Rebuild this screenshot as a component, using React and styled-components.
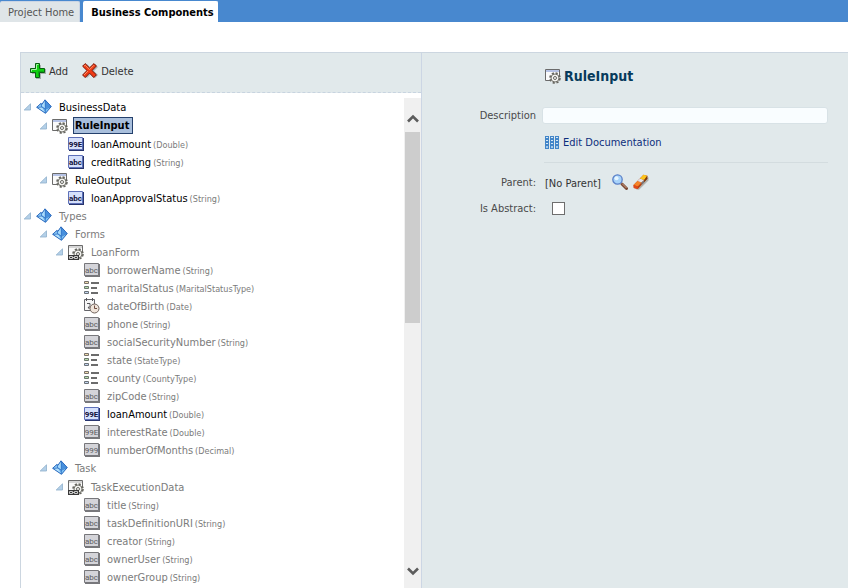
import React, { useState } from 'react'
import styled, { createGlobalStyle, css } from 'styled-components'

const GlobalStyle = createGlobalStyle`
    * { box-sizing: border-box; }
    body {
        margin: 0;
        background: #ffffff;
        font-family: Tahoma, "DejaVu Sans Condensed", "Noto Sans", sans-serif;
        font-size: 11px;
        color: #333333;
    }
    button, input { font: inherit; color: inherit; }
    svg { display: block; flex: none; }
`

const Page = styled.div`
    height: 100vh;
    display: flex;
    flex-direction: column;
    overflow: hidden;
`
const TabBar = styled.nav`
    display: flex;
    align-items: flex-end;
    gap: 3px;
    height: 22px;
    background: #4888cf;
`
const Tab = styled.button`
    height: 21px;
    padding: 0 5px 0 8px;
    border: 1px solid #cbd5e4;
    border-left-width: 0;
    border-bottom: none;
    border-radius: 2px 2px 0 0;
    background: #dfe5e8;
    color: #555555;
    white-space: nowrap;
    cursor: pointer;
    ${({ $active }) => $active && css`
        border-color: #ffffff;
        background: #ffffff;
        color: #000000;
        font-weight: bold;
        padding: 0 3px 0 8px;
    `}
`
const Workspace = styled.main`
    flex: 1;
    min-height: 0;
    display: flex;
    margin: 30px 0 0 20px;
    border-top: 1px solid #ccd6e0;
    border-left: 1px solid #ccd6e0;
    background: #e1e9eb;
`
const TreePanel = styled.section`
    width: 401px;
    flex: none;
    display: flex;
    flex-direction: column;
    border-right: 1px solid #ccd6e4;
`
const Toolbar = styled.div`
    display: flex;
    align-items: center;
    gap: 14px;
    height: 40px;
    padding: 0 0 3px 9px;
    border-bottom: 1px dashed #c8d4e0;
`
const ToolButton = styled.button`
    display: flex;
    align-items: center;
    gap: 3px;
    padding: 0;
    border: none;
    background: none;
    cursor: pointer;
`
const TreeArea = styled.div`
    flex: 1;
    min-height: 0;
    display: flex;
    padding-top: 5px;
    background: #ffffff;
`
const Tree = styled.ul`
    flex: 1;
    min-width: 0;
    margin: 0;
    padding: 0;
    list-style: none;
    overflow: hidden;
`
const Row = styled.li`
    display: flex;
    align-items: center;
    height: ${({ $tall }) => ($tall ? 19 : 18)}px;
    padding-left: ${({ $level }) => 2 + $level * 16}px;
    white-space: nowrap;
    color: ${({ $own }) => ($own ? '#000000' : '#7b7b7b')};
`
const Toggle = styled.span`
    width: 13px;
    flex: none;
`
const Name = styled.span`
    margin-left: 5px;
    padding: 1px 2px 0;
    line-height: 17px;
    ${({ $selected }) => $selected && css`
        padding: 0 3px 0 1px;
        line-height: 15px;
        border: 1px solid #24406c;
        background: #a9bfdc;
        font-weight: bold;
    `}
`
const Type = styled.span`
    padding-top: 1px;
    font-size: 9px;
    line-height: 16px;
    color: #7b7b7b;
`
const ScrollBar = styled.div`
    width: 17px;
    display: flex;
    flex-direction: column;
    background: #f0f0f0;
`
const ScrollButton = styled.button`
    height: 34px;
    display: flex;
    align-items: center;
    justify-content: center;
    padding: ${({ $up }) => ($up ? '8px 0 0' : 0)};
    border: none;
    background: none;
`
const Track = styled.div`
    flex: 1;
    padding: 0 1px;
`
const Thumb = styled.div`
    height: 191px;
    background: #cdcdcd;
`
const Details = styled.section`
    flex: 1;
    min-width: 0;
    padding: 4px 20px 0 0;
`
const Line = styled.div`
    display: grid;
    grid-template-columns: 114px 1fr;
    column-gap: 6px;
    align-items: center;
    height: ${({ $height }) => $height}px;
`
const Label = styled.label`
    text-align: right;
    color: #4a4a4a;
`
const Field = styled.div`
    grid-column: 2;
    display: flex;
    align-items: center;
    gap: 3px;
    padding-left: 3px;
`
const Value = styled.span`
    padding-top: 2px;
`
const Title = styled.h1`
    margin: 0;
    font-size: 14px;
    line-height: 18px;
    color: #063a5b;
`
const TextInput = styled.input`
    width: 100%;
    height: 17px;
    padding: 0 3px;
    border: 1px solid #d8e2e6;
    border-radius: 3px;
    background: #f9fdff;
`
const DocLink = styled.a`
    color: #0d2e7c;
    text-decoration: none;
`
const Rule = styled.hr`
    margin: 13px 0 6px 122px;
    border: none;
    border-top: 1px solid #d3dcdf;
`
const IconButton = styled.button`
    margin-left: ${({ $first }) => ($first ? 8 : 2)}px;
    padding: 0;
    border: none;
    background: none;
    cursor: pointer;
`
const CheckBox = styled.input`
    appearance: none;
    width: 13px;
    height: 13px;
    margin: 0 0 0 7px;
    border: 1px solid #6e6e6e;
    background: #ffffff;
    &:checked { background: #6e6e6e; }
`

const AddIcon = () => (
    <svg width="16" height="16" viewBox="0 0 16 16">
        <path d="M7 2h4v4h5v5h-5v5H6v-5H2V8" fill="#8b958f" opacity=".7" />
        <path d="M5.500 .5h4v5h5v4h-5v5h-4v-5h-5v-4h5z" fill="#0fd00f" stroke="#0a5f12" />
        <path d="M6.500 6.500V1.500h2M1.500 8.500v-2h5" fill="none" stroke="#a8f5a5" />
        <path d="M8.500 13V8.500h5" fill="none" stroke="#0aa812" />
    </svg>
)
const DeleteIcon = () => (
    <svg width="16" height="16" viewBox="0 0 16 16">
        <path d="M2 4L5 1l4 4 4-4 3 3-4 4 4 4-3 3-4-4-4 4-3-3 4-4z" fill="#8c9494" opacity=".6" />
        <path d="M.6 3.200L3.200.6l4.300 4.300L12 .6l2.400 2.400-4.400 4.500 4.400 4.300-2.600 2.800-4.300-4.500-4.300 4.500-2.600-2.600L5 7.500z" fill="#f03a14" stroke="#7c1608" />
        <path d="M2 3.200l1.200-1 4.300 4.500 4.500-4.500M2 12l4-4" fill="none" stroke="#ff9166" />
    </svg>
)
const PackageIcon = () => (
    <svg width="16" height="16" viewBox="0 0 16 16">
        <path d="M9 .8L15.300 7.500l-5.800 7L.6 8.300 4.800 4.500 6 5z" fill="#62abea" />
        <path d="M.6 8.300L4.800 4.500 6 8.500z" fill="#8ecbf7" />
        <path d="M9 1v8.500L5.500 7z" fill="#a9dbfb" />
        <path d="M9 1l6 6.500-5.500 2z" fill="#468fdd" />
        <path d="M1 8.500l5-.5 3.500 6z" fill="#b2e0fc" />
        <path d="M9.500 9.500l5.500-2-5.500 6.800z" fill="#7fc5f6" />
        <path d="M9.500 14.300L.6 8.300l4.200-3.800L6 5.200l3-4.400 6.300 6.700z" fill="none" stroke="#2461b8" strokeWidth=".9" />
        <path d="M9.300 1v13M4.800 4.500l1 3.500 3.700 2.200L15 7.500M1 8.400l5-.4" fill="none" stroke="#2f70c4" strokeWidth=".8" />
    </svg>
)
const ObjectIcon = ({ linked }) => (
    <svg width="16" height="16" viewBox="0 0 16 16">
        <path d="M.5 1.500h14v11H.5z" fill="#fafafa" stroke="#6b6b6b" />
        <path d="M1 2h13v2H1z" fill={linked ? '#d6d6d6' : '#b6c3e6'} />
        <circle cx="10" cy="10" r="5" fill="#f3f3f0" stroke="#65655f" strokeWidth="1.600" strokeDasharray="2.200 1.727" />
        <circle cx="10" cy="10" r="4" fill="#f3f3f0" stroke="#65655f" strokeWidth=".9" />
        <circle cx="10" cy="10" r="1.500" fill="#ffffff" stroke="#65655f" />
        {linked && (
            <>
                <path d="M0 11h11v5H0z" fill="#383838" />
                <path d="M1.500 12.500h3v2h-3zM6.500 12.500h3v2h-3zM4 13.500h3" fill="none" stroke="#c9c9c9" />
            </>
        )}
    </svg>
)
const ValueIcon = ({ text, own }) => (
    <svg width="16" height="16" viewBox="0 0 16 16">
        <path d="M1 2h15v13H1z" fill={own ? '#26346e' : '#77777b'} />
        <path d="M.5 1.500h14v12H.5z" fill={own ? '#d5e0fb' : '#d4d4d9'} stroke={own ? '#5e70b8' : '#77777b'} />
        {text && (
            <text x="7.500" y="10.500" textAnchor="middle" fontFamily="Roboto, sans-serif" fontSize="8" fontWeight={own ? 'bold' : 'normal'} fill={own ? '#10103c' : '#5c5c60'}>{text}</text>
        )}
    </svg>
)
const EnumIcon = () => (
    <svg width="16" height="16" viewBox="0 0 16 16">
        <path d="M.5 1.500h4v2h-4z" fill="#efdcae" stroke="#77716b" />
        <path d="M.5 6.500h4v2h-4z" fill="#b7dcae" stroke="#6b776b" />
        <path d="M.5 11.500h4v2h-4z" fill="#c3d6f0" stroke="#6b7177" />
        <path d="M7 3h8M7 8h6M7 13h7" stroke="#6c6c6c" strokeWidth="2" />
    </svg>
)
const DateIcon = () => (
    <svg width="16" height="16" viewBox="0 0 16 16">
        <path d="M.5 1.500h10v11H.5z" fill="#f6f6f6" stroke="#65656a" />
        <path d="M2.500 0v3M8.500 0v3" stroke="#55555a" />
        <path d="M3 5.500h3v2L4 10h3" fill="none" stroke="#55555a" />
        <circle cx="10.500" cy="10.500" r="4.500" fill="#efe4da" stroke="#6f625c" />
        <path d="M10.500 7.500v3H13" fill="none" stroke="#6f4c40" />
    </svg>
)
const BooksIcon = () => (
    <svg width="15" height="13" viewBox="0 0 15 13">
        {[0, 5, 10].map((x) => (
            <g key={x}>
                <path d={`M${x} 0h4v13h-4z`} fill="#4285c8" />
                <path d={`M${x + 1} 1.500h2M${x + 1} 4.500h2M${x + 1} 7.500h2`} stroke="#d5e7f5" />
                <path d={`M${x + 1} 11h2`} stroke="#a5c8e8" strokeWidth="2" />
            </g>
        ))}
    </svg>
)
const SearchIcon = () => (
    <svg width="16" height="16" viewBox="0 0 16 16">
        <path d="M10 10l4.500 4.500" stroke="#7a4935" strokeWidth="3" strokeLinecap="round" />
        <path d="M10 9.500l4.500 4.500" stroke="#d6a384" />
        <circle cx="5.500" cy="5.500" r="4.700" fill="#a8d3fa" stroke="#5a80c8" strokeWidth="1.300" />
        <circle cx="4.500" cy="4.300" r="2" fill="#e6f6ff" />
    </svg>
)
const EraserIcon = () => (
    <svg width="16" height="16" viewBox="0 0 16 16">
        <path d="M3 15.500L15.500 3v3.500L6 15.800z" fill="#8d8d86" opacity=".6" />
        <path d="M.5 11L10.500 .7l3.800 1v3L4.800 15l-4-1z" fill="#b8400f" />
        <path d="M.5 11L4.500 7l4 1.500-3.700 4z" fill="#f58428" />
        <path d="M.5 11l4.300 1.500V15l-4-1z" fill="#e0481a" />
        <path d="M4.500 7L7 4.400l4.200 1.500L8.500 8.500z" fill="#e4e4e6" />
        <path d="M8.500 8.500l2.700-2.600v2.500L8.500 11z" fill="#77777c" />
        <path d="M7 4.400L10.500 .7l3.800 1-3.100 4.200z" fill="#fcc51c" />
        <path d="M11.200 5.900l3.100-4.200v3l-3.100 3.500z" fill="#7a3d0c" />
    </svg>
)
const ToggleIcon = () => (
    <svg width="8" height="8" viewBox="0 0 8 8">
        <path d="M7.500 .8v6.200H1.200z" fill="#b4d0e8" stroke="#8fb0cc" strokeWidth=".8" />
    </svg>
)
const Chevron = ({ up }) => (
    <svg width="12" height="10" viewBox="0 0 12 10">
        <path d={up ? 'M1 7.500l5-5 5 5' : 'M1 2.500l5 5 5-5'} fill="none" stroke="#5c5c5c" strokeWidth="2.600" />
    </svg>
)

const NODES = [
    { level: 0, kind: 'package', name: 'BusinessData', own: true },
    { level: 1, kind: 'object', name: 'RuleInput', own: true, tall: true },
    { level: 2, kind: '99E', name: 'loanAmount', type: 'Double', own: true },
    { level: 2, kind: 'abc', name: 'creditRating', type: 'String', own: true },
    { level: 1, kind: 'object', name: 'RuleOutput', own: true },
    { level: 2, kind: 'abc', name: 'loanApprovalStatus', type: 'String', own: true },
    { level: 0, kind: 'package', name: 'Types' },
    { level: 1, kind: 'package', name: 'Forms' },
    { level: 2, kind: 'linked', name: 'LoanForm' },
    { level: 3, kind: 'abc', name: 'borrowerName', type: 'String' },
    { level: 3, kind: 'enum', name: 'maritalStatus', type: 'MaritalStatusType' },
    { level: 3, kind: 'date', name: 'dateOfBirth', type: 'Date' },
    { level: 3, kind: 'abc', name: 'phone', type: 'String' },
    { level: 3, kind: 'abc', name: 'socialSecurityNumber', type: 'String' },
    { level: 3, kind: 'enum', name: 'state', type: 'StateType' },
    { level: 3, kind: 'enum', name: 'county', type: 'CountyType' },
    { level: 3, kind: 'abc', name: 'zipCode', type: 'String' },
    { level: 3, kind: '99E', name: 'loanAmount', type: 'Double', own: true },
    { level: 3, kind: '99E', name: 'interestRate', type: 'Double' },
    { level: 3, kind: '999', name: 'numberOfMonths', type: 'Decimal' },
    { level: 1, kind: 'package', name: 'Task' },
    { level: 2, kind: 'linked', name: 'TaskExecutionData', tall: true },
    { level: 3, kind: 'abc', name: 'title', type: 'String' },
    { level: 3, kind: 'abc', name: 'taskDefinitionURI', type: 'String' },
    { level: 3, kind: 'abc', name: 'creator', type: 'String' },
    { level: 3, kind: 'abc', name: 'ownerUser', type: 'String' },
    { level: 3, kind: 'abc', name: 'ownerGroup', type: 'String' },
    { level: 3, kind: '', name: '' },
]

const NodeIcon = ({ kind, own }) => {
    if (kind === 'package') return <PackageIcon />
    if (kind === 'object') return <ObjectIcon />
    if (kind === 'linked') return <ObjectIcon linked />
    if (kind === 'enum') return <EnumIcon />
    if (kind === 'date') return <DateIcon />
    return <ValueIcon text={kind} own={own} />
}

const App = () => {
    const [tab, setTab] = useState('Business Components')
    const [selected, setSelected] = useState(1)
    const [description, setDescription] = useState('')

    return (
        <Page>
            <GlobalStyle />
            <TabBar>
                {['Project Home', 'Business Components'].map((t) => (
                    <Tab key={t} $active={t === tab} onClick={() => setTab(t)}>{t}</Tab>
                ))}
            </TabBar>
            <Workspace>
                <TreePanel>
                    <Toolbar>
                        <ToolButton><AddIcon />Add</ToolButton>
                        <ToolButton><DeleteIcon />Delete</ToolButton>
                    </Toolbar>
                    <TreeArea>
                        <Tree>
                            {NODES.map((node, i) => (
                                <Row key={i} $level={node.level} $own={node.own} $tall={node.tall} onClick={() => setSelected(i)}>
                                    <Toggle>{!node.type && node.name && <ToggleIcon />}</Toggle>
                                    <NodeIcon kind={node.kind} own={node.own} />
                                    <Name $selected={i === selected}>{node.name}</Name>
                                    {node.type && <Type>({node.type})</Type>}
                                </Row>
                            ))}
                        </Tree>
                        <ScrollBar>
                            <ScrollButton $up aria-label="Scroll up"><Chevron up /></ScrollButton>
                            <Track><Thumb /></Track>
                            <ScrollButton aria-label="Scroll down"><Chevron /></ScrollButton>
                        </ScrollBar>
                    </TreeArea>
                </TreePanel>
                <Details>
                    <Line $height={38}>
                        <Field><ObjectIcon /><Title>RuleInput</Title></Field>
                    </Line>
                    <Line $height={40}>
                        <Label htmlFor="description">Description</Label>
                        <TextInput id="description" value={description} onChange={(e) => setDescription(e.target.value)} />
                    </Line>
                    <Line $height={14}>
                        <Field><BooksIcon /><DocLink href="#documentation">Edit Documentation</DocLink></Field>
                    </Line>
                    <Rule />
                    <Line $height={26}>
                        <Label as="span">Parent:</Label>
                        <Field>
                            <Value>[No Parent]</Value>
                            <IconButton $first aria-label="Find parent"><SearchIcon /></IconButton>
                            <IconButton aria-label="Clear parent"><EraserIcon /></IconButton>
                        </Field>
                    </Line>
                    <Line $height={26}>
                        <Label htmlFor="abstract">Is Abstract:</Label>
                        <Field><CheckBox id="abstract" type="checkbox" /></Field>
                    </Line>
                </Details>
            </Workspace>
        </Page>
    )
}

export default App
